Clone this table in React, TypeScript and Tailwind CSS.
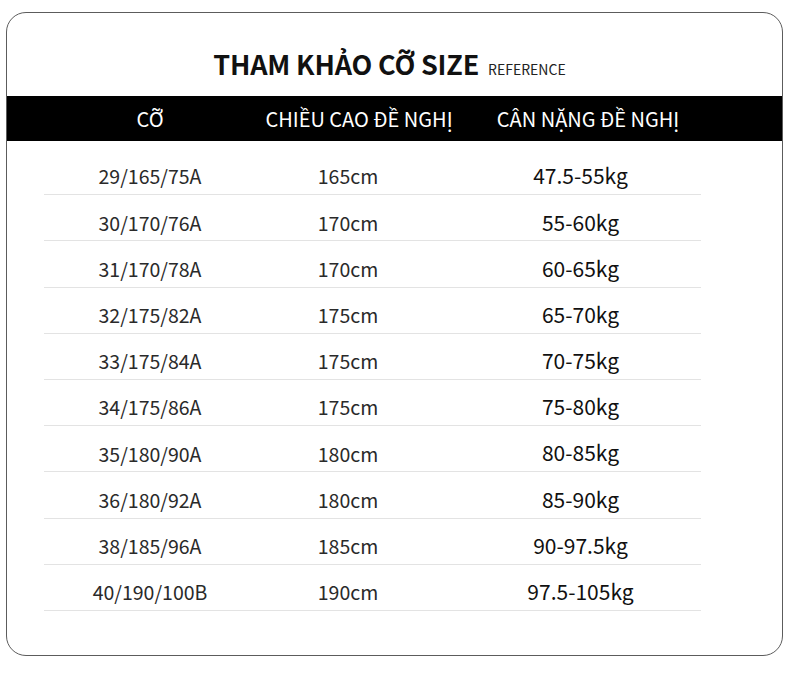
const ROWS = [
  { size: '29/165/75A', height: '165cm', weight: '47.5-55kg' },
  { size: '30/170/76A', height: '170cm', weight: '55-60kg' },
  { size: '31/170/78A', height: '170cm', weight: '60-65kg' },
  { size: '32/175/82A', height: '175cm', weight: '65-70kg' },
  { size: '33/175/84A', height: '175cm', weight: '70-75kg' },
  { size: '34/175/86A', height: '175cm', weight: '75-80kg' },
  { size: '35/180/90A', height: '180cm', weight: '80-85kg' },
  { size: '36/180/92A', height: '180cm', weight: '85-90kg' },
  { size: '38/185/96A', height: '185cm', weight: '90-97.5kg' },
  { size: '40/190/100B', height: '190cm', weight: '97.5-105kg' },
]

const font = { fontFamily: '"Noto Sans CJK SC", "Noto Sans", sans-serif' }

export default function App() {
  return (
    <div className="w-[790px] h-[677px] bg-white pt-[12px] pl-[6px]" style={font}>
      <div className="w-[777px] h-[644px] rounded-[20px] border border-[#5c5c5c] bg-white overflow-hidden">
        {/* Title */}
        <div className="h-[83px] pt-[32px] flex items-baseline justify-center pr-[10px]">
          <span className="text-[27px] leading-[38px] font-bold text-[#111] tracking-[-0.2px]">
            THAM KHẢO CỠ SIZE
          </span>
          <span className="ml-[9px] text-[14px] text-[#222]">REFERENCE</span>
        </div>

        {/* Header band */}
        <div className="h-[45px] bg-black grid grid-cols-[212px_206px_252px] pl-[37px] items-center text-white text-[20px]">
          <div className="text-center">CỠ</div>
          <div className="text-center">CHIỀU CAO ĐỀ NGHỊ</div>
          <div className="text-center">CÂN NẶNG ĐỀ NGHỊ</div>
        </div>

        {/* Rows */}
        <div className="pt-[8px] pl-[37px]">
          {ROWS.map(row => (
            <div
              key={row.size}
              className="w-[657px] h-[46.2px] box-border pt-[9px] border-b border-[#e3e3e3] grid grid-cols-[212px_184px_261px] items-center"
            >
              <div className="text-center text-[19.5px] text-[#2a2a2a]">{row.size}</div>
              <div className="text-center text-[19.5px] text-[#2a2a2a]">{row.height}</div>
              <div className="text-center pl-[20px] text-[21px] text-[#111]">{row.weight}</div>
            </div>
          ))}
        </div>
      </div>
    </div>
  )
}
